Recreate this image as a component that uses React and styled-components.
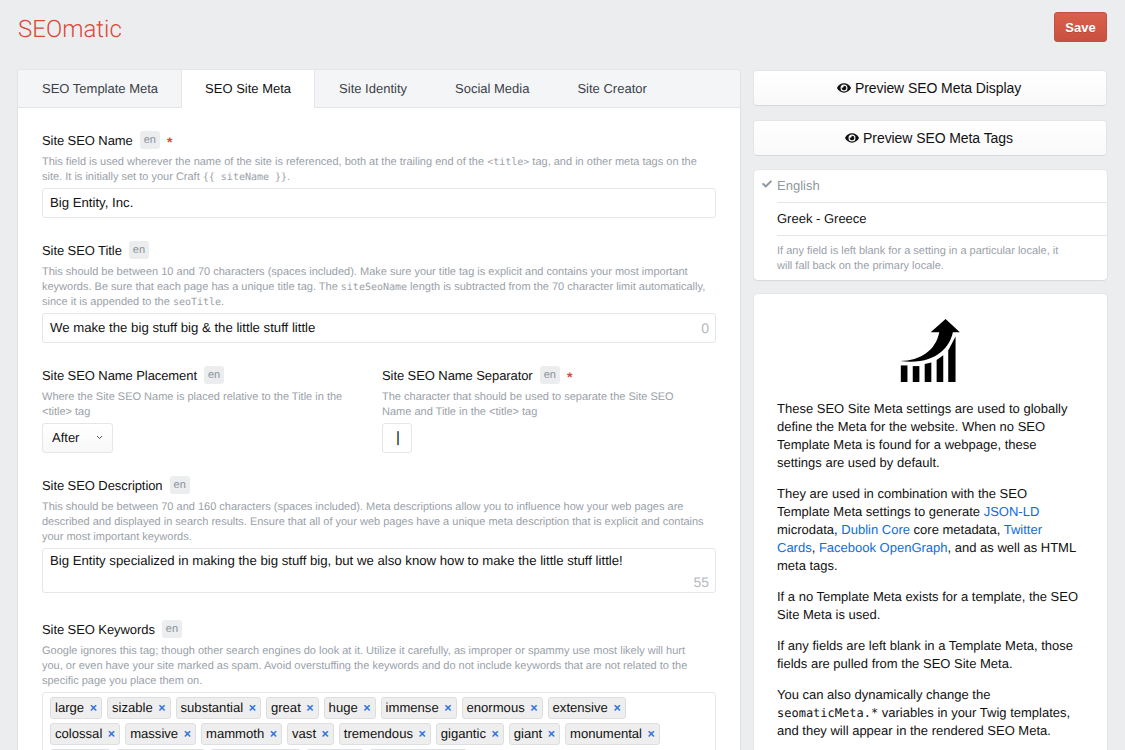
import React from 'react';
import styled, { createGlobalStyle } from 'styled-components';
import { FaEye, FaCheck } from 'react-icons/fa';

const GlobalStyle = createGlobalStyle`
  html, body {
    margin: 0;
    height: 750px;
    overflow: hidden;
    background: #ebedef;
  }
  * { box-sizing: border-box; }
  body {
    font-family: "Liberation Sans", Arial, sans-serif;
    color: #29323d;
    text-rendering: geometricPrecision;
  }
`;

const Page = styled.div`
  width: 1125px;
  height: 750px;
  overflow: hidden;
  padding: 12px 18px 0;
`;

const Header = styled.header`
  display: flex;
  justify-content: space-between;
  align-items: flex-start;
  height: 58px;
`;

const Logo = styled.h1`
  margin: 1px 0 0;
  font-family: Roboto, sans-serif;
  font-size: 24px;
  line-height: 32px;
  font-weight: 300;
  color: #da4a38;
`;

const SaveButton = styled.button`
  width: 53px;
  height: 30px;
  padding: 0;
  border: 1px solid #c2503f;
  border-radius: 3px;
  background: linear-gradient(#d9604c, #c9503e);
  color: #fff;
  font: bold 13px "Liberation Sans", sans-serif;
  text-shadow: 0 1px 0 rgba(0, 0, 0, 0.15);
`;

const Columns = styled.div`
  display: grid;
  grid-template-columns: 722px 353px;
  column-gap: 14px;
  align-items: start;
`;

const MainPane = styled.main`
  background: #fff;
  border-radius: 3px;
  box-shadow: 0 0 0 1px rgba(0, 0, 20, 0.03), 0 1px 2px rgba(0, 0, 20, 0.06);
`;

const Tabs = styled.nav`
  display: flex;
  height: 38px;
  background: #f4f5f6;
  border-bottom: 1px solid #e3e5e8;
  border-radius: 3px 3px 0 0;
`;

const Tab = styled.a`
  padding: 0 24px;
  font-size: 13px;
  line-height: 37px;
  color: ${p => (p.$active ? '#111' : '#3a4148')};
  ${p => p.$active && `
    background: #fff;
    height: 38px;
    margin-left: -1px;
    border-left: 1px solid #e3e5e8;
    border-right: 1px solid #e3e5e8;
    padding: 0 23px;
  `}
`;

const Form = styled.div`
  padding: 23px 24px 0;
`;

const Field = styled.div`
  margin-bottom: 23px;
`;

const Row = styled.div`
  display: grid;
  grid-template-columns: 340px 1fr;
`;

const Label = styled.div`
  display: flex;
  align-items: center;
  height: 18px;
  font-size: 13px;
  letter-spacing: -0.08px;
  color: #111;
`;

const Lang = styled.span`
  margin-left: 7px;
  padding: 0 4px;
  height: 18px;
  border-radius: 3px;
  background: #ebedef;
  color: #8a929b;
  font-size: 11px;
  letter-spacing: 0;
  line-height: 19px;
`;

const Required = styled.span`
  margin-left: 7px;
  padding-top: 4px;
  color: #da4a38;
  font-size: 14px;
  font-weight: bold;
`;

const Hint = styled.p`
  margin: 6px 0 3px;
  font-size: 11px;
  line-height: 15px;
  color: #9aa1a9;
`;

const Code = styled.code`
  font-family: "DejaVu Sans Mono", monospace;
  font-size: 10px;
`;

const InputBox = styled.div`
  position: relative;
  height: 30px;
  padding: 0 7px;
  border: 1px solid #e4e6e9;
  border-radius: 3px;
  background: #fff;
  color: #111;
  font-size: 13.2px;
  line-height: 27px;
`;

const Counter = styled.span`
  position: absolute;
  right: 6px;
  bottom: ${p => (p.$low ? '2px' : '6px')};
  color: #b4b9bf;
  font-size: 14px;
  line-height: 16px;
`;

const SelectBox = styled.div`
  display: flex;
  align-items: center;
  justify-content: space-between;
  width: 71px;
  height: 30px;
  padding: 0 9px 2px;
  border: 1px solid #e4e6e9;
  border-radius: 3px;
  background: linear-gradient(#fff, #f8f8f9);
  font-size: 13px;
  color: #111;
`;

const SeparatorBox = styled.div`
  width: 30px;
  height: 30px;
  padding-left: 13px;
  border: 1px solid #e4e6e9;
  border-radius: 3px;
  background: #fff;
  font-size: 15px;
  line-height: 28px;
  color: #111;
`;

const TextArea = styled(InputBox)`
  height: 45px;
  margin-bottom: 27px;
  line-height: 24px;
`;

const TagBox = styled.div`
  display: flex;
  flex-direction: column;
  gap: 4px;
  padding: 4px 7px;
  border: 1px solid #e4e6e9;
  border-radius: 3px;
`;

const TagRow = styled.div`
  display: flex;
  gap: 5px;
`;

const Tag = styled.span`
  display: inline-flex;
  align-items: center;
  height: 22px;
  padding: 0 4px 2px;
  border: 1px solid #dcdee1;
  border-radius: 3px;
  background: #eeeeee;
  color: #111;
  font-size: 13.1px;
`;

const TagX = styled.span`
  margin-left: 5.5px;
  padding-top: 2px;
  color: #2f73e0;
  font-size: 12.5px;
  line-height: 14px;
  font-weight: bold;
`;

const Side = styled.aside`
  display: flex;
  flex-direction: column;
`;

const PreviewButton = styled.button`
  display: flex;
  align-items: center;
  justify-content: center;
  gap: 4px;
  height: 34px;
  margin: 1px 1px 15px 0;
  padding: 0 2px 0 0;
  border: 0;
  border-radius: 3px;
  background: linear-gradient(#fff, #f9f9fa);
  box-shadow: 0 0 0 1px rgba(0, 0, 20, 0.03), 0 1px 1px rgba(0, 0, 20, 0.06);
  color: #111;
  font: 14px "Liberation Sans", sans-serif;
  letter-spacing: -0.08px;
`;

const Card = styled.section`
  background: #fff;
  border-radius: 4px;
  box-shadow: 0 0 0 1px rgba(0, 0, 20, 0.03), 0 1px 1px rgba(0, 0, 20, 0.05);
`;

const LocaleCard = styled(Card)`
  height: 110px;
  padding-left: 23px;
  margin-bottom: 14px;
`;

const Locale = styled.div`
  position: relative;
  height: 33px;
  border-bottom: 1px solid #e3e5e8;
  font-size: 13px;
  line-height: 32px;
  color: ${p => (p.$current ? '#8f97a0' : '#111')};
`;

const LocaleCheck = styled.span`
  position: absolute;
  left: -15px;
  top: 1px;
  color: #8f97a0;
  font-size: 10px;
`;

const LocaleHint = styled(Hint)`
  margin: 8px 40px 0 0;
`;

const InfoCard = styled(Card)`
  padding: 24px 26px 0 23px;
  font-size: 13px;
  line-height: 18px;
  color: #111;
`;

const ChartWrap = styled.div`
  display: flex;
  justify-content: center;
  height: 65px;
  margin-bottom: 17px;
  padding-left: 1px;
`;

const Para = styled.p`
  margin: 0 0 13px;
`;

const Link = styled.a`
  color: #0d6be0;
`;

const ParaCode = styled.code`
  font-family: "DejaVu Sans Mono", monospace;
  font-size: 12px;
`;

const TrendIcon = () => (
  <svg width="62" height="65" viewBox="115 52 186 196">
    <path d="M210 95L255 55 298 95H277C268 140 225 195 118 182 180 180 225 150 236 95Z" fill="#000" />
    <path d="M120 195H140V245H120Z" fill="#000" />
    <path d="M156 197H176V245H156Z" fill="#000" />
    <path d="M192 191L212 186V245H192Z" fill="#000" />
    <path d="M228 179L248 164V245H228Z" fill="#000" />
    <path d="M263 150L285 108V245H263Z" fill="#000" />
  </svg>
);

const keywordRows = [
  ['large', 'sizable', 'substantial', 'great', 'huge', 'immense', 'enormous', 'extensive'],
  ['colossal', 'massive', 'mammoth', 'vast', 'tremendous', 'gigantic', 'giant', 'monumental'],
  ['mighty', 'gargantuan', 'stupendous', 'jumbo', 'considerable'],
];

export default function App() {
  return (
    <Page>
      <GlobalStyle />
      <Header>
        <Logo>SEOmatic</Logo>
        <SaveButton>Save</SaveButton>
      </Header>
      <Columns>
        <MainPane>
          <Tabs>
            <Tab>SEO Template Meta</Tab>
            <Tab $active>SEO Site Meta</Tab>
            <Tab>Site Identity</Tab>
            <Tab>Social Media</Tab>
            <Tab>Site Creator</Tab>
          </Tabs>
          <Form>
            <Field>
              <Label>Site SEO Name<Lang>en</Lang><Required>*</Required></Label>
              <Hint>This field is used wherever the name of the site is referenced, both at the trailing end of the <Code>&lt;title&gt;</Code> tag, and in other meta tags on the site. It is initially set to your Craft <Code>{'{{ siteName }}'}</Code>.</Hint>
              <InputBox>Big Entity, Inc.</InputBox>
            </Field>
            <Field>
              <Label>Site SEO Title<Lang>en</Lang></Label>
              <Hint>This should be between 10 and 70 characters (spaces included). Make sure your title tag is explicit and contains your most important keywords. Be sure that each page has a unique title tag. The <Code>siteSeoName</Code> length is subtracted from the 70 character limit automatically, since it is appended to the <Code>seoTitle</Code>.</Hint>
              <InputBox>We make the big stuff big &amp; the little stuff little<Counter>0</Counter></InputBox>
            </Field>
            <Row>
              <Field>
                <Label>Site SEO Name Placement<Lang>en</Lang></Label>
                <Hint>Where the Site SEO Name is placed relative to the Title in the<br />&lt;title&gt; tag</Hint>
                <SelectBox>After
                  <svg width="7" height="5" viewBox="0 0 7 5"><path d="M1 1l2.5 2.5L6 1" fill="none" stroke="#555" /></svg>
                </SelectBox>
              </Field>
              <Field>
                <Label>Site SEO Name Separator<Lang>en</Lang><Required>*</Required></Label>
                <Hint>The character that should be used to separate the Site SEO<br />Name and Title in the &lt;title&gt; tag</Hint>
                <SeparatorBox>|</SeparatorBox>
              </Field>
            </Row>
            <Field>
              <Label>Site SEO Description<Lang>en</Lang></Label>
              <Hint>This should be between 70 and 160 characters (spaces included). Meta descriptions allow you to influence how your web pages are described and displayed in search results. Ensure that all of your web pages have a unique meta description that is explicit and contains your most important keywords.</Hint>
              <TextArea>Big Entity specialized in making the big stuff big, but we also know how to make the little stuff little!<Counter $low>55</Counter></TextArea>
            </Field>
            <Field>
              <Label>Site SEO Keywords<Lang>en</Lang></Label>
              <Hint>Google ignores this tag; though other search engines do look at it. Utilize it carefully, as improper or spammy use most likely will hurt<br />you, or even have your site marked as spam. Avoid overstuffing the keywords and do not include keywords that are not related to the<br />specific page you place them on.</Hint>
              <TagBox>
                {keywordRows.map(row => (
                  <TagRow key={row[0]}>
                    {row.map(k => <Tag key={k}>{k}<TagX>×</TagX></Tag>)}
                  </TagRow>
                ))}
              </TagBox>
            </Field>
          </Form>
        </MainPane>
        <Side>
          <PreviewButton><FaEye size={14} /> Preview SEO Meta Display</PreviewButton>
          <PreviewButton><FaEye size={14} /> Preview SEO Meta Tags</PreviewButton>
          <LocaleCard>
            <Locale $current><LocaleCheck><FaCheck /></LocaleCheck>English</Locale>
            <Locale>Greek - Greece</Locale>
            <LocaleHint>If any field is left blank for a setting in a particular locale, it will fall back on the primary locale.</LocaleHint>
          </LocaleCard>
          <InfoCard>
            <ChartWrap><TrendIcon /></ChartWrap>
            <Para>These SEO Site Meta settings are used to globally define the Meta for the website. When no SEO Template Meta is found for a webpage, these settings are used by default.</Para>
            <Para>They are used in combination with the SEO Template Meta settings to generate <Link>JSON-LD</Link> microdata, <Link>Dublin Core</Link> core metadata, <Link>Twitter Cards</Link>, <Link>Facebook OpenGraph</Link>, and as well as HTML meta tags.</Para>
            <Para>If a no Template Meta exists for a template, the SEO Site Meta is used.</Para>
            <Para>If any fields are left blank in a Template Meta, those fields are pulled from the SEO Site Meta.</Para>
            <Para>You can also dynamically change the <ParaCode>seomaticMeta.*</ParaCode> variables in your Twig templates, and they will appear in the rendered SEO Meta.</Para>
          </InfoCard>
        </Side>
      </Columns>
    </Page>
  );
}
